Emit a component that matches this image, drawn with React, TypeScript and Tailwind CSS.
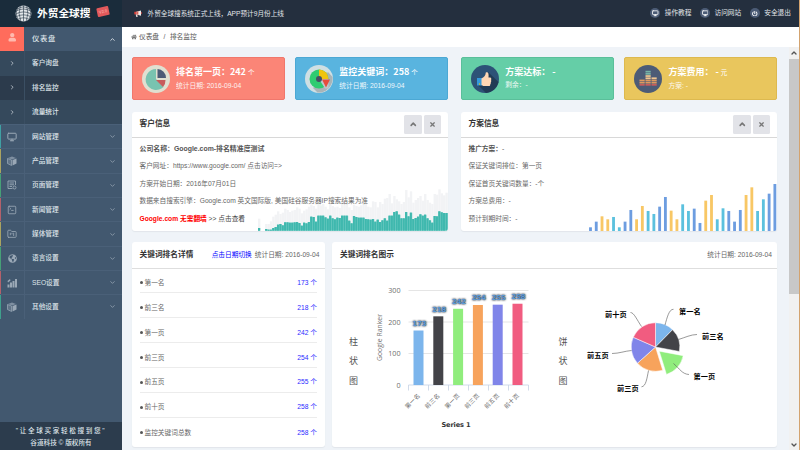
import type { ReactNode } from "react";
import { ChevronDown, ChevronRight, ChevronUp, FolderKanban, Monitor, SquareTerminal } from "lucide-react";
import { FaGlobeAmericas, FaHome, FaPowerOff, FaTimes, FaUser } from "react-icons/fa";

const subItems = [
  { label: "客户询盘", active: false },
  { label: "排名监控", active: true },
  { label: "流量统计", active: false },
];

const menuItems = [
  { label: "网站管理", stripe: "bg-[#3fa0a3]", icon: <Monitor className="size-[10px]" strokeWidth={2.4} /> },
  { label: "产品管理", stripe: "bg-[#aaa361]", icon: <CubeIcon /> },
  { label: "页面管理", stripe: "bg-[#46a077]", icon: <PageIcon /> },
  { label: "新闻管理", stripe: "bg-[#b3616b]", icon: <SquareTerminal className="size-[10px]" strokeWidth={2} /> },
  { label: "媒体管理", stripe: "bg-[#aaa361]", icon: <FolderKanban className="size-[10px]" strokeWidth={2} /> },
  { label: "语言设置", stripe: "bg-[#46a077]", icon: <FaGlobeAmericas className="size-[9px]" /> },
  { label: "SEO设置", stripe: "bg-[#b3616b]", icon: <SeoIcon /> },
  { label: "其他设置", stripe: "bg-[#3fa08c]", icon: <CubeIcon /> },
];

const ranks = [
  { name: "第一名", value: 173, color: "#7cb5ec" },
  { name: "前三名", value: 218, color: "#434348" },
  { name: "第一页", value: 242, color: "#90ed7d" },
  { name: "前三页", value: 254, color: "#f7a35c" },
  { name: "前五页", value: 255, color: "#8085e9" },
  { name: "前十页", value: 258, color: "#f15c80" },
];

const tealBars = [
  8, 0, 0, 5, 3, 3, 8, 11, 18, 20, 16, 25, 25, 24, 24, 25, 26, 23, 15, 24, 22, 26, 42, 41, 27, 45, 45, 45, 40, 36,
  45, 37, 34, 39, 38, 45, 45, 45, 30, 22, 44, 41, 39, 39, 39, 35, 34, 33, 35, 27, 33, 26, 31, 37, 30, 45, 45, 56, 58, 48,
  37, 37, 56, 43, 54, 35, 38, 42, 49, 45, 48, 37, 31, 24, 44, 43, 58, 55, 53, 53,
];

const grayBars = [
  36, 0, 0, 20, 20, 28, 42, 48, 58, 50, 54, 66, 62, 56, 60, 62, 70, 66, 52, 60, 64, 72, 78, 74, 66, 84, 76, 80, 72, 64,
  82, 74, 70, 72, 68, 88, 84, 80, 70, 62, 78, 74, 72, 76, 80, 82, 72, 70, 88, 86, 70, 86, 80, 96, 98, 110, 82, 104, 94, 88,
  80, 86, 122, 100, 118, 84, 92, 98, 104, 90, 110, 92, 84, 80, 110, 108, 124, 112, 106, 114,
];

const planBars = [
  12, 29, 45, 36, 43, 12, 29, 64, 36, 76, 61, 52, 74, 103, 62, 36, 81, 61, 68, 25, 92, 109, 36, 69, 61, 29, 64, 109,
  132, 61, 96, 113, 142,
];
// one letter per bar: blue, yellow, teal
const planColors = "bbyyttbbyyttbbyyttbbyyttbbbyyttbb";
const palette: Record<string, string> = { b: "#6d9de0", y: "#f8c765", t: "#5bc1de" };

function CubeIcon() {
  return (
    <svg viewBox="0 0 20 20" className="size-[10px]" fill="currentColor">
      <path d="M1 5l8 3v11l-8-4z" fillOpacity=".35" />
      <path d="M2 4l8-3 8 3-8 3z" fillOpacity=".7" />
      <path d="M11 8l8-3v10l-8 4z" />
      <path d="M1 5l8 3v11l-8-4z" fill="none" stroke="currentColor" strokeWidth="1.5" />
    </svg>
  );
}

function PageIcon() {
  return (
    <svg viewBox="0 0 20 20" className="size-[10px]" fill="none" stroke="currentColor" strokeWidth="1.8">
      <path d="M11 17H2V2h15v8M5 6h9M5 9.500h9M5 13h5" />
      <circle cx="15" cy="15" r="3" />
    </svg>
  );
}

function SeoIcon() {
  return (
    <svg viewBox="0 0 20 20" className="size-[10px]" fill="currentColor">
      <path d="M1 13h4v6H1zM6 9h4v10H6zM11 6h4v13h-4zM16 2h4v17h-4zM1 6l5-4 1 3-5 4z" />
    </svg>
  );
}

function Megaphone() {
  return (
    <svg viewBox="0 0 24 22" className="h-[7.5px] w-[8px]">
      <path d="M1 5h6v8H1z" fill="#e2463f" />
      <path d="M7 5l14-4v16L7 13z" fill="#f1ece9" />
      <path d="M7 5l6-1.700v11.500L7 13z" fill="#d9655c" />
      <path d="M5 13h5l1 8H7z" fill="#e9dedb" />
      <path d="M21 6h2v6h-2z" fill="#e2463f" />
    </svg>
  );
}

function GlobeLogo() {
  return (
    <svg viewBox="0 0 32 32" className="size-[17px]">
      <circle cx="16" cy="16" r="15" fill="#e3e7ea" />
      <g fill="none" stroke="#1b2d3c" strokeWidth="1.1">
        <path d="M1 12Q16 3 31 12M1 17Q16 9 31 17M2 22Q16 15 30 22M6 27Q16 21 26 27M4 8Q16 -1 28 8" />
        <path d="M16 1v30M10 2Q5 16 11 31M22 2Q27 16 21 31M5 6Q-1 16 6 27M27 6Q33 16 26 27" />
      </g>
    </svg>
  );
}

function Sidebar() {
  return (
    <aside className="flex w-[122px] shrink-0 flex-col bg-[#42586f] text-[6.7px] font-medium text-[#dfe5ea]">
      <div className="flex h-[27px] items-center bg-[#1a2c3b] pl-[15px]">
        <GlobeLogo />
        <span className="ml-[5px] text-[10.7px] font-bold leading-[27px] text-white">外贸全球搜</span>
        <span className="mb-[4px] ml-[7px] flex h-[9px] w-[12px] -rotate-12 items-center justify-center rounded-[1px] bg-[#e2595b] text-[4px] leading-none text-[#ffc9c5]">
          V2.0
        </span>
      </div>
      <div className="flex h-[24.3px] items-center">
        <div className="flex h-full w-[24px] items-center justify-center bg-[#ff6c5c] text-[#ffb9ae]">
          <FaUser className="mb-[3px] size-[8.5px]" />
        </div>
        <span className="ml-[8px] text-[7.3px] tracking-[.7px]">仪表盘</span>
        <ChevronUp className="ml-auto mr-[6px] size-[7px]" strokeWidth={3} />
      </div>
      {subItems.map((item) => (
        <div key={item.label} className={`flex h-[24.3px] items-center ${item.active ? "bg-[#2c3b4c]" : "bg-[#35495c]"}`}>
          <div className="flex h-full w-[24.5px] items-center justify-center border-r border-[#3b4f63]">
            <ChevronRight className="size-[6.5px]" strokeWidth={2.5} />
          </div>
          <span className="ml-[7.5px]">{item.label}</span>
        </div>
      ))}
      {menuItems.map((item) => (
        <div key={item.label} className="flex h-[24.3px] items-center border-t border-[#4a6078]">
          <div className={`h-full w-px ${item.stripe}`} />
          <div className="flex h-full w-[23.5px] items-center justify-center border-r border-[#4a6078] text-[#9aa8b6]">
            {item.icon}
          </div>
          <span className="ml-[7.5px]">{item.label}</span>
          <ChevronDown className="ml-auto mr-[6px] size-[7px] text-[#a9b6c2]" strokeWidth={2.2} />
        </div>
      ))}
      <div className="mt-auto flex h-[28px] flex-col items-center bg-[#2c3c4d] pt-[3px] text-[6.6px] leading-[12px]">
        <span className="tracking-[1.65px]">"让全球买家轻松搜到您"</span>
        <span>谷道科技 © 版权所有</span>
      </div>
    </aside>
  );
}

function TopLink({ icon, label }: { icon: ReactNode; label: string }) {
  return (
    <div className="flex items-center gap-[4.5px]">
      <span className="flex size-[10px] items-center justify-center rounded-full bg-[#4b5b75] text-white">{icon}</span>
      {label}
    </div>
  );
}

function StatCard({
  color,
  icon,
  title,
  unit,
  note,
}: {
  color: string;
  icon: ReactNode;
  title: string;
  unit?: string;
  note: string;
}) {
  return (
    <div className={`flex h-[43px] w-[153px] rounded-[2px] border pl-[9px] pt-[6.5px] text-white ${color}`}>
      <svg viewBox="0 0 28 28" className="size-[28px] shrink-0">
        {icon}
      </svg>
      <div className="ml-[6.5px]">
        <div className="font-['Noto_Sans_CJK_SC',sans-serif] text-[9px] font-bold leading-[13px]">
          {title}
          {unit && <span className="ml-[2px] text-[6.5px] font-normal">{unit}</span>}
        </div>
        <div className="text-[6.75px] leading-[14px] opacity-90">{note}</div>
      </div>
    </div>
  );
}

function PanelButtons() {
  return (
    <div className="ml-auto mr-[7px] flex gap-[2px] text-[#777]">
      <span className="flex h-[19px] w-[18px] items-center justify-center rounded-[1.5px] bg-[#e2e3e8]">
        <ChevronUp className="size-[8.5px]" strokeWidth={4.5} />
      </span>
      <span className="flex h-[19px] w-[17px] items-center justify-center rounded-[1.5px] bg-[#e2e3e8]">
        <FaTimes className="size-[7px]" />
      </span>
    </div>
  );
}

function BarChart() {
  return (
    <svg width="200" height="178" viewBox="332 269 200 178" className="overflow-visible">
      {[300, 200, 100, 0].map((tick, i) => (
        <g key={tick}>
          <line x1="408.5" x2="528.5" y1={290.5 + i * 31.5} y2={290.5 + i * 31.5} stroke={tick ? "#dedede" : "#c5d2e4"} strokeWidth=".8" />
          <text x="400.5" y={293 + i * 31.5} textAnchor="end" fontSize="7.2" fill="#707070" fontFamily="Open Sans, sans-serif">
            {tick}
          </text>
        </g>
      ))}
      {[0, 1, 2, 3, 4, 5, 6].map((i) => (
        <line key={i} x1={408.5 + i * 20} x2={408.5 + i * 20} y1="385" y2="390.5" stroke="#c5d2e4" strokeWidth=".8" />
      ))}
      <text
        transform="translate(382 361) rotate(-90)"
        fontSize="6.8"
        fill="#777"
        textLength="47"
        fontFamily="Open Sans, sans-serif"
      >
        Google Ranker
      </text>
      {ranks.map((rank, i) => {
        const x = 418.5 + i * 19.8;
        const h = rank.value * 0.315;
        return (
          <g key={rank.name}>
            <rect x={x - 5} y={385 - h} width="10" height={h} fill={rank.color} />
            <text
              x={x + 1}
              y={382 - h - 1.5}
              textAnchor="middle"
              textLength="14"
              fontSize="6.8"
              fontWeight="bold"
              fill="#5b9ad8"
              fontFamily="DejaVu Sans, sans-serif"
              className="[text-shadow:0_0_2px_#1c3350,0_0_2px_#333]"
            >
              {rank.value}
            </text>
            <text
              transform={`translate(${x + 2} 396) rotate(-45)`}
              textAnchor="end"
              fontSize="5.8"
              letterSpacing=".3"
              fill="#666"
            >
              {rank.name}
            </text>
          </g>
        );
      })}
      <text x="456" y="426.5" textAnchor="middle" fontSize="6.6" fontWeight="bold" fill="#333" textLength="29" fontFamily="DejaVu Sans, sans-serif">
        Series 1
      </text>
    </svg>
  );
}

const pieLabels = [
  { x: 679, y: 313.5, line: "M665 325C667 318 669 309 673.5 309.3" },
  { x: 702, y: 339, line: "M678.5 339.5C685 337.5 691 334.5 697 334.5" },
  { x: 693.5, y: 378.5, line: "M673.5 363.5C680 369 682 374 689 374.5" },
  { x: 617, y: 390.5, line: "M648.5 370.5C647 378 646 386.5 641.5 386.8" },
  { x: 587, y: 357.5, line: "M631.5 350.5C625 351 619 353.5 612 353.5" },
  { x: 605, y: 317, line: "M641.5 326.5C637 320 634 312.5 630.5 312.5" },
];

function PieChart() {
  const total = ranks.reduce((sum, rank) => sum + rank.value, 0);
  let start = 0;
  return (
    <svg width="200" height="178" viewBox="577 269 200 178" className="overflow-visible">
      {ranks.map((rank, i) => {
        const end = start + (rank.value / total) * Math.PI * 2;
        // the third slice is pulled out of the pie
        const cx = i === 2 ? 659.3 : 655.5;
        const cy = i === 2 ? 351.2 : 347;
        const d = `M${cx} ${cy}L${cx + 24.3 * Math.sin(start)} ${cy - 24.3 * Math.cos(start)}A24.3 24.3 0 0 1 ${cx + 24.3 * Math.sin(end)} ${cy - 24.3 * Math.cos(end)}Z`;
        start = end;
        return <path key={rank.name} d={d} fill={rank.color} stroke="#fff" strokeWidth=".5" />;
      })}
      {pieLabels.map((label, i) => (
        <g key={ranks[i].name}>
          <path d={label.line} fill="none" stroke="#555" strokeWidth=".6" />
          <text x={label.x} y={label.y + 0.2} fontSize="7.2" fontWeight="bold" fill="#000">
            {ranks[i].name}
          </text>
        </g>
      ))}
    </svg>
  );
}

function VerticalTitle({ text }: { text: string }) {
  return (
    <div className="flex flex-col items-center pt-[64px] text-[9px] leading-[19.5px] text-[#555]">
      {text.split("").map((char) => (
        <span key={char}>{char}</span>
      ))}
    </div>
  );
}

const panel = "rounded-[3px] bg-white shadow-[0_1px_1px_#e1e5ea]";

export default function App() {
  return (
    <div className="flex h-[450px] w-[800px] overflow-hidden whitespace-nowrap bg-[#eff3f8] font-['Liberation_Sans','Noto_Sans_CJK_SC',sans-serif]">
      <Sidebar />
      <div className="flex flex-1 flex-col">
        <header className="flex h-[27px] items-center bg-[#242f3e] pl-[12px] pr-[8px] text-[6.7px] text-[#e2e6ea]">
          <Megaphone />
          <span className="ml-[5.5px] text-[6.65px]">外贸全球搜系统正式上线，APP预计9月份上线</span>
          <div className="ml-auto flex gap-[8.5px]">
            <TopLink icon={<Monitor className="size-[6.5px]" strokeWidth={3} />} label="操作教程" />
            <TopLink icon={<Monitor className="size-[6.5px]" strokeWidth={3} />} label="访问网站" />
            <TopLink icon={<FaPowerOff className="size-[5.5px]" />} label="安全退出" />
          </div>
        </header>
        <nav className="flex h-[19.5px] items-center bg-white pl-[9px] text-[6.7px] text-[#555]">
          <FaHome className="size-[6px] text-[#777]" />
          <span className="ml-[2px]">仪表盘</span>
          <span className="mx-[4.5px]">/</span>
          <span>排名监控</span>
        </nav>
        <div className="flex h-[403.5px]">
          <main className="w-[666.5px] pl-[9.5px] pt-[10.5px]">
            <section className="flex w-[645.5px] justify-between">
              <StatCard
                color="border-[#f0776c] bg-[#fb8577]"
                title="排名第一页：242"
                unit="个"
                note="统计日期: 2016-09-04"
                icon={
                  <>
                    <circle cx="14" cy="14" r="14" fill="#e0e0d1" />
                    <path d="M14 14V4a10.5 10.5 0 1 0 7.5 18z" fill="#79c3b0" />
                    <path d="M15.5 13V4a9 9 0 0 1 8.500 9z" fill="#4c5b76" />
                    <path d="M14 15h9.500a10 10 0 0 1-2.500 7z" fill="#c75c5c" />
                  </>
                }
              />
              <StatCard
                color="border-[#4ca8d4] bg-[#59b4df]"
                title="监控关键词：258"
                unit="个"
                note="统计日期: 2016-09-04"
                icon={
                  <>
                    <circle cx="14" cy="14" r="14" fill="#cfdfe3" />
                    <path d="M23 7l4.500 5a14 14 0 0 1-15 15.500L8 23z" fill="#a8b4b8" />
                    <circle cx="14" cy="14" r="9.500" fill="#2ecc71" />
                    <path d="M14 14V4.500a9.500 9.500 0 0 1 9.500 9.500z" fill="#f1c40f" />
                    <path d="M14 14h9.500v9.500H20z" fill="#bccace" />
                    <path d="M17 14.500h8l-4 8z" fill="#e74c3c" />
                    <circle cx="14" cy="14" r="3" fill="#445064" />
                  </>
                }
              />
              <div className="ml-[2.5px]">
                <StatCard
                  color="border-[#5abf9a] bg-[#65cea7]"
                  title="方案达标： -"
                  note="剩余：-"
                  icon={
                    <>
                      <circle cx="14" cy="14" r="14" fill="#2d5277" />
                      <path d="M17 7l10.500 10A14 14 0 0 1 15 28L7 20z" fill="#213b55" />
                      <path d="M6 13h5v7.500H6z" fill="#3498db" />
                      <circle cx="8.5" cy="19" r=".7" fill="#f1c40f" />
                      <path d="M10.500 13.500c3-1.500 4-3 4.300-6 2.200-1 3.200.5 2.700 5H19c1.500 0 1.500 2 1 2.500.5 1 .3 1.700-.2 2.200.2 1 0 1.500-.5 2 0 1.300-.5 1.800-1.500 1.800h-5.500l-1.800-1z" fill="#ffd7b5" />
                    </>
                  }
                />
              </div>
              <StatCard
                color="border-[#ddb94f] bg-[#e9c65d]"
                title="方案费用： -"
                unit="元"
                note="方案: -"
                icon={
                  <>
                    <circle cx="14" cy="14" r="14" fill="#4c5b76" />
                    {[5.5, 11.5, 17.5].map((x, col) =>
                      ["#c75c5c", "#e0995e", "#e0995e", "#f0c691", "#f0c691", "#77b3a6", "#77b3a6"]
                        .slice(0, [3, 7, 4][col])
                        .map((fill, row) => <rect key={`${x}-${row}`} x={x} y={19 - row * 2.2} width="5.2" height="1.7" fill={fill} />),
                    )}
                  </>
                }
              />
            </section>

            <section className="mt-[12px] flex gap-[12.5px] text-[6.7px] text-[#666]">
              <div className={`relative h-[119px] w-[316.5px] overflow-hidden ${panel}`}>
                <svg viewBox="0 0 571 128" preserveAspectRatio="none" className="absolute bottom-0 right-0 h-[42.7px] w-[190px]">
                  {grayBars.map((h, i) => (
                    <rect key={i} x={i * 7.13} y={128 - h} width="7.13" height={h} fill="#f2f3f5" />
                  ))}
                  {tealBars.map((h, i) => (
                    <g key={i}>
                      <rect x={i * 7.13} y={128 - h} width="7.13" height={h} fill="#60c6bd" />
                      <rect x={i * 7.13} y={128 - h} width="5.7" height={h} fill="#3fb8ae" />
                    </g>
                  ))}
                </svg>
                <div className="flex h-[25.5px] items-center border-b border-[#d8d8d8] pl-[8px]">
                  <h2 className="text-[7.7px] font-bold text-[#333]">客户信息</h2>
                  <PanelButtons />
                </div>
                <div className="relative pl-[8px] pt-[2px] leading-[17.6px]">
                  <p className="text-[6.9px] font-bold text-[#555]">公司名称：Google.com-排名精准度测试</p>
                  <p>客户网址：https://www.google.com/ 点击访问=&gt;</p>
                  <p>方案开始日期：2016年07月01日</p>
                  <p>数据来自搜索引擎：Google.com 英文国际版, 美国硅谷服务器IP搜索结果为准</p>
                  <p className="text-[#444]">
                    <b className="text-[#f00]">Google.com 无需翻墙</b> &gt;&gt; 点击查看
                  </p>
                </div>
              </div>
              <div className={`relative h-[119px] w-[316.5px] overflow-hidden ${panel}`}>
                <svg viewBox="0 0 564 145" className="absolute bottom-0 right-0 h-[48.3px] w-[188px]">
                  {planBars.map((h, i) => (
                    <rect key={i} x={i * 17.3} y={145 - h} width="8.5" height={h} fill={palette[planColors[i]]} />
                  ))}
                </svg>
                <div className="flex h-[25.5px] items-center border-b border-[#d8d8d8] pl-[8px]">
                  <h2 className="text-[7.7px] font-bold text-[#333]">方案信息</h2>
                  <PanelButtons />
                </div>
                <div className="relative pl-[8px] pt-[2px] leading-[17.6px]">
                  <p className="font-bold text-[#555]">推广方案：<span className="font-normal">-</span></p>
                  <p>保证关键词排位：第一页</p>
                  <p>保证首页关键词数量：-个</p>
                  <p>方案总费用：-</p>
                  <p>预计到期时间：-</p>
                </div>
              </div>
            </section>

            <section className="mt-[11px] flex gap-[6.5px] text-[6.7px] text-[#666]">
              <div className={`h-[205px] w-[193.5px] ${panel}`}>
                <div className="flex h-[26.5px] items-center border-b border-[#dedede] pl-[8px] pr-[5.5px]">
                  <h2 className="text-[7.7px] font-bold text-[#333]">关键词排名详情</h2>
                  <span className="ml-auto text-[#00f]">点击日期切换</span>
                  <span className="ml-[3px]">统计日期: 2016-09-04</span>
                </div>
                <ul className="px-[8px]">
                  {[...ranks, { name: "监控关键词总数", value: 258 }].map((rank) => (
                    <li
                      key={rank.name}
                      className="flex h-[24.9px] items-center border-b border-[#ececec] pt-[5px] last:border-0"
                    >
                      <span className="mr-[2px] size-[3px] rounded-full bg-[#555]" />
                      {rank.name}
                      <span className="ml-auto text-[#2a2aff]">{rank.value} 个</span>
                    </li>
                  ))}
                </ul>
              </div>
              <div className={`h-[205px] w-[445.5px] ${panel}`}>
                <div className="flex h-[26.5px] items-center justify-between border-b border-[#dedede] pl-[8.5px] pr-[5px]">
                  <h2 className="text-[7.7px] font-bold text-[#333]">关键词排名图示</h2>
                  <span>统计日期: 2016-09-04</span>
                </div>
                <div className="grid h-[178px] grid-cols-[44px_156px_63px_182px]">
                  <VerticalTitle text="柱状图" />
                  <div className="-ml-[44px]">
                    <BarChart />
                  </div>
                  <VerticalTitle text="饼状图" />
                  <div className="-ml-[18px]">
                    <PieChart />
                  </div>
                </div>
              </div>
            </section>
          </main>
          <div className="flex w-[10.5px] flex-col items-center bg-[#f1f1f1] text-[#555]">
            <ChevronUp className="mb-[2px] mt-[2px] size-[8px]" strokeWidth={4} />
            <div className="h-[235px] w-full bg-[#c8c8c8]" />
            <ChevronDown className="mb-[1px] mt-auto size-[8px]" strokeWidth={4} />
          </div>
        </div>
      </div>
      <div className="w-px shrink-0 bg-[#d3a36f]" />
    </div>
  );
}
